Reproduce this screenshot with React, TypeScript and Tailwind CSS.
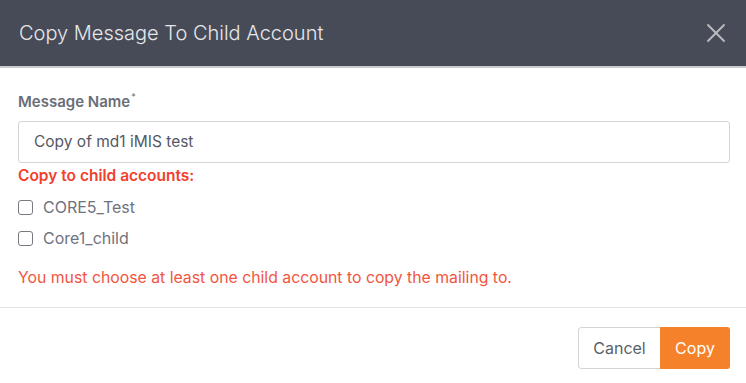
import { X } from "lucide-react";

const accounts = ["CORE5_Test", "Core1_child"];

export default function App() {
  return (
    <div className="flex h-[383px] w-[746px] flex-col bg-white font-['Inter',sans-serif]">
      {/* header */}
      <div className="flex h-[68px] shrink-0 items-center justify-between border-b-2 border-[#c9cacd] bg-[#474b57] pl-[19px] pr-[14px]">
        <h2 className="text-[20px] font-light text-[#e6e7ea]">
          Copy Message To Child Account
        </h2>
        <X className="h-8 w-8 text-[#b9bbc1]" strokeWidth={1.4} />
      </div>

      {/* body */}
      <div className="flex flex-col px-[18px] pt-[24px]">
        <label className="flex text-[15px] font-semibold leading-[20px] text-[#6a6e79]">
          Message Name
          <span className="ml-[1px] -mt-[5px] text-[9px] font-normal">*</span>
        </label>
        <div className="mt-[9px] flex h-[42px] w-[712px] items-center rounded-[3px] border border-[#d4d5d8] px-[15px] text-[15.5px] text-[#555963]">
          Copy of md1 iMIS test
        </div>
        <div className="mt-[3px] text-[15.5px] font-semibold leading-[20px] text-[#f2402c]">
          Copy to child accounts:
        </div>
        <div className="mt-[11px] flex flex-col gap-[11px]">
          {accounts.map((a) => (
            <label key={a} className="flex h-[20px] items-center gap-[10px] text-[16px] text-[#6f737d]">
              <span className="h-[15px] w-[15px] rounded-[3px] border border-[#777a80] bg-white" />
              {a}
            </label>
          ))}
        </div>
        <p className="mt-[20px] text-[15.8px] leading-[20px] text-[#f2553f]">
          You must choose at least one child account to copy the mailing to.
        </p>
      </div>

      {/* footer */}
      <div className="mt-[19px] flex justify-end border-t border-[#e2e3e5] px-[16px] pt-[19px]">
        <div className="flex h-[42px] overflow-hidden rounded-[3px]">
          <button className="w-[82px] rounded-l-[3px] border border-r-0 border-[#d4d5d8] bg-white text-[16px] text-[#5b5f69]">
            Cancel
          </button>
          <button className="w-[70px] bg-[#f5822a] text-[16px] text-white">Copy</button>
        </div>
      </div>
    </div>
  );
}
